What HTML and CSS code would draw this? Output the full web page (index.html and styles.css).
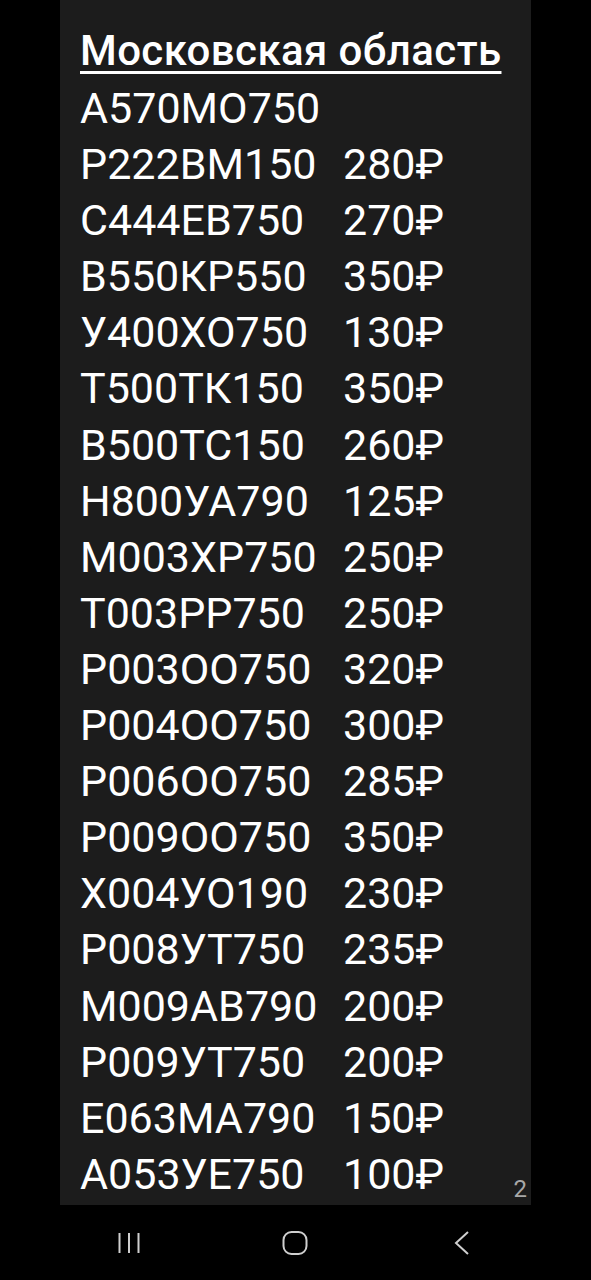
FILE: index.html
```html
<!DOCTYPE html>
<html lang="ru">
<head>
  <meta charset="UTF-8">
  <title>Московская область</title>
  <link rel="stylesheet" href="styles.css">
</head>
<body>
  <div class="screen">
    <div class="note">
      <h1 class="title">Московская область</h1>
      <div class="list">
        <div class="row"><span>А570МО750</span><span></span></div>
        <div class="row"><span>Р222ВМ150</span><span>280₽</span></div>
        <div class="row"><span>С444ЕВ750</span><span>270₽</span></div>
        <div class="row"><span>В550КР550</span><span>350₽</span></div>
        <div class="row"><span>У400ХО750</span><span>130₽</span></div>
        <div class="row"><span>Т500ТК150</span><span>350₽</span></div>
        <div class="row"><span>В500ТС150</span><span>260₽</span></div>
        <div class="row"><span>Н800УА790</span><span>125₽</span></div>
        <div class="row"><span>М003ХР750</span><span>250₽</span></div>
        <div class="row"><span>Т003РР750</span><span>250₽</span></div>
        <div class="row"><span>Р003ОО750</span><span>320₽</span></div>
        <div class="row"><span>Р004ОО750</span><span>300₽</span></div>
        <div class="row"><span>Р006ОО750</span><span>285₽</span></div>
        <div class="row"><span>Р009ОО750</span><span>350₽</span></div>
        <div class="row"><span>Х004УО190</span><span>230₽</span></div>
        <div class="row"><span>Р008УТ750</span><span>235₽</span></div>
        <div class="row"><span>М009АВ790</span><span>200₽</span></div>
        <div class="row"><span>Р009УТ750</span><span>200₽</span></div>
        <div class="row"><span>Е063МА790</span><span>150₽</span></div>
        <div class="row"><span>А053УЕ750</span><span>100₽</span></div>
      </div>
      <div class="page-num">2</div>
    </div>

    <div class="navbar">
      <svg class="nav-icon" width="24" height="24" viewBox="0 0 24 24">
        <path d="M2.5 2v20M12 2v20M21.5 2v20" stroke="#cfcfcf" stroke-width="2" fill="none"/>
      </svg>
      <svg class="nav-icon" width="28" height="28" viewBox="0 0 28 28">
        <rect x="2.5" y="3" width="23" height="22" rx="8" stroke="#cfcfcf" stroke-width="2" fill="none"/>
      </svg>
      <svg class="nav-icon" width="24" height="28" viewBox="0 0 24 28">
        <path d="M19 3L7 14l12 11" stroke="#cfcfcf" stroke-width="2" fill="none"/>
      </svg>
    </div>
  </div>
</body>
</html>
```

FILE: styles.css
```css
body {
  margin: 0;
  background: #000;
  font-family: Roboto, 'Noto Sans', sans-serif;
}
.screen {
  width: 591px;
  height: 1280px;
  display: flex;
  flex-direction: column;
}
.note {
  position: relative;
  width: 471px;
  height: 1205px;
  margin-left: 60px;
  background: #1c1c1c;
  color: #fff;
  padding: 22px 0 0 20px;
  box-sizing: border-box;
  overflow: hidden;
}
.title {
  margin: 0;
  font-size: 42px;
  font-weight: 500;
  line-height: 58px;
  text-decoration: underline;
  text-decoration-thickness: 3px;
  text-underline-offset: 6px;
  letter-spacing: 0.4px;
}
.list {
  font-size: 43px;
  line-height: 56.1px;
}
.row {
  display: grid;
  grid-template-columns: 263px auto;
}
.page-num {
  position: absolute;
  right: 4px;
  bottom: 2px;
  font-size: 24px;
  color: #a8a8a8;
}
.navbar {
  flex: 1;
  display: flex;
  justify-content: center;
  align-items: center;
  gap: 140px;
  padding-right: 2px;
}
```
